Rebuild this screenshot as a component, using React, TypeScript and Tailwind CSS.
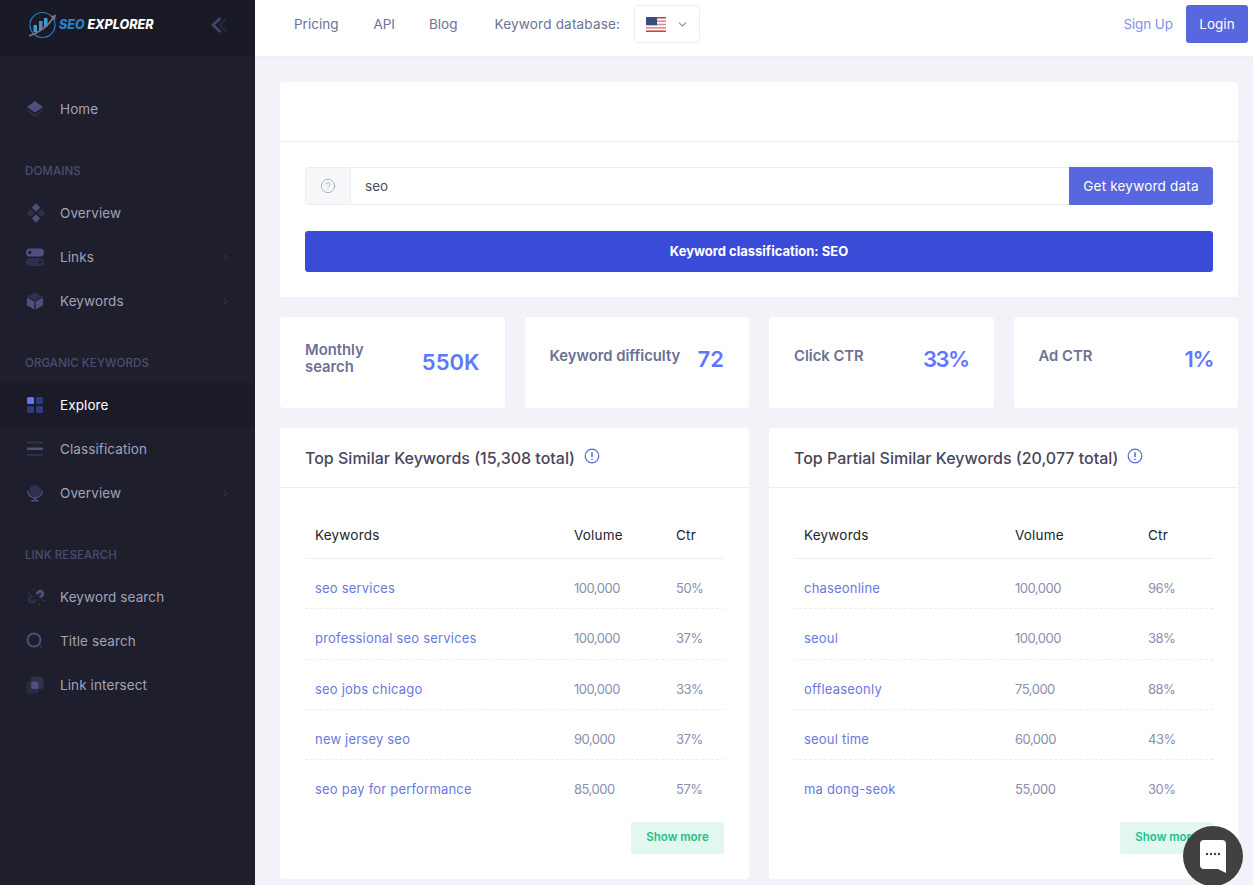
import { ChevronDown, ChevronRight, CircleHelp } from 'lucide-react';
import type { ReactNode } from 'react';

const similar = [
  ['seo services', '100,000', '50%'],
  ['professional seo services', '100,000', '37%'],
  ['seo jobs chicago', '100,000', '33%'],
  ['new jersey seo', '90,000', '37%'],
  ['seo pay for performance', '85,000', '57%'],
];

const partial = [
  ['chaseonline', '100,000', '96%'],
  ['seoul', '100,000', '38%'],
  ['offleaseonly', '75,000', '88%'],
  ['seoul time', '60,000', '43%'],
  ['ma dong-seok', '55,000', '30%'],
];

const c1 = '#4f4f7e';
const c2 = '#30304e';

function Logo() {
  return (
    <svg width="30" height="28" viewBox="0 0 30 28" fill="none">
      <circle cx="14.5" cy="14" r="12.5" stroke="#2b7fc4" strokeWidth="1.2" />
      <rect x="5.5" y="14" width="3.5" height="7" fill="#3a9be0" />
      <rect x="11" y="10" width="3.5" height="9" fill="#5c86b8" />
      <rect x="16" y="7" width="3.5" height="9" fill="#3a9be0" />
      <path d="M1 25 C10 22 20 15 26 6" stroke="#77777f" strokeWidth="1.8" />
      <path d="M22.5 5.5 L28 3.5 L27 9 Z" fill="#77777f" />
    </svg>
  );
}

const icons: Record<string, ReactNode> = {
  home: (
    <svg width="18" height="18" viewBox="0 0 18 18">
      <path d="M9 1 L17 7 L9 12.5 L1 7 Z" fill={c1} />
      <path d="M1 11 L9 17 L17 11 L15.8 10.2 L9 15 L2.2 10.2 Z" fill={c2} />
    </svg>
  ),
  overview: (
    <svg width="20" height="20" viewBox="0 0 20 20">
      <rect x="7" y="1.5" width="6" height="6" rx="1" transform="rotate(45 10 4.5)" fill={c1} />
      <rect x="7" y="12.5" width="6" height="6" rx="1" transform="rotate(45 10 15.5)" fill={c1} />
      <rect x="1.5" y="7" width="6" height="6" rx="1" transform="rotate(45 4.5 10)" fill={c2} />
      <rect x="12.5" y="7" width="6" height="6" rx="1" transform="rotate(45 15.5 10)" fill={c2} />
    </svg>
  ),
  links: (
    <svg width="18" height="18" viewBox="0 0 18 18">
      <rect x="0" y="0.5" width="18" height="8" rx="3.5" fill={c1} />
      <circle cx="3.8" cy="4.5" r="1.7" fill="#1e1e2d" />
      <rect x="0" y="10" width="18" height="8" rx="3.5" fill={c2} />
      <circle cx="14.2" cy="14" r="1.7" fill="#1e1e2d" />
    </svg>
  ),
  keywords: (
    <svg width="18" height="18" viewBox="0 0 18 18">
      <path d="M9 0.5 L17 4.5 L9 8.5 L1 4.5 Z" fill={c2} />
      <path d="M1 5.5 L8.4 9.4 V17.5 L1 13.5 Z" fill={c1} />
      <path d="M17 5.5 L9.6 9.4 V17.5 L17 13.5 Z" fill={c1} />
    </svg>
  ),
  explore: (
    <svg width="18" height="18" viewBox="0 0 18 18">
      <rect x="1" y="1" width="7" height="7" rx="1.5" fill="#5d78ff" />
      <rect x="10" y="1" width="7" height="7" rx="1.5" fill="#2f3a7e" />
      <rect x="1" y="10" width="7" height="7" rx="1.5" fill="#2f3a7e" />
      <rect x="10" y="10" width="7" height="7" rx="1.5" fill="#2f3a7e" />
    </svg>
  ),
  classification: (
    <svg width="18" height="18" viewBox="0 0 18 18">
      <rect x="1" y="1.5" width="16" height="2" fill={c2} />
      <rect x="1" y="7.5" width="16" height="2.5" fill={c1} />
      <rect x="1" y="14" width="16" height="2" fill={c2} />
    </svg>
  ),
  globe: (
    <svg width="18" height="18" viewBox="0 0 18 18">
      <circle cx="9.2" cy="7" r="6" fill={c2} />
      <path d="M1 6.5 A8 8 0 0 0 17 6.5 L15.6 6.5 A6.6 6.6 0 0 1 2.4 6.5 Z" fill={c1} />
      <rect x="8.2" y="14" width="1.8" height="2.5" fill={c1} />
      <rect x="5" y="16" width="8" height="1.6" rx="0.8" fill={c1} />
    </svg>
  ),
  magnet: (
    <svg width="20" height="20" viewBox="0 0 20 20" fill="none">
      <path d="M10.5 7 L12.5 5 A2.4 2.4 0 0 1 16 8.5 L14 10.5" stroke={c1} strokeWidth="3" />
      <path d="M6 8.5 L4 10.5 A2.6 2.6 0 0 0 8 14.5 L10 12.5" stroke={c2} strokeWidth="3" />
      <path d="M7.5 1 L8.3 3.5 M1.5 6 L4 6.8 M13 16 L14 18.5 M16 13 L18.5 14" stroke={c2} strokeWidth="1.4" />
    </svg>
  ),
  search: (
    <svg width="18" height="18" viewBox="0 0 18 18" fill="none">
      <circle cx="8" cy="8" r="6.5" stroke={c1} strokeWidth="2" />
      <path d="M13 13 L16.5 16.5" stroke={c2} strokeWidth="2" />
    </svg>
  ),
  intersect: (
    <svg width="18" height="18" viewBox="0 0 18 18">
      <rect x="5" y="0.5" width="12.5" height="12.5" rx="2.5" fill={c2} />
      <rect x="0.5" y="5" width="12.5" height="12.5" rx="2.5" fill="#2a2a45" />
      <rect x="5" y="5.5" width="7.5" height="7.5" rx="1.5" fill={c1} />
    </svg>
  ),
};

function NavRow({ icon, label, active, arrow }: { icon: string; label: string; active?: boolean; arrow?: boolean }) {
  return (
    <div className={`flex h-11 items-center pl-[26px] pr-[24px] ${active ? 'bg-[#1b1b28]' : ''}`}>
      <div className="flex w-[34px] shrink-0 items-center">{icons[icon]}</div>
      <span className={`flex-1 text-[13.5px] tracking-[0.1px] ${active ? 'text-white' : 'text-[#a2a3b7]'}`}>{label}</span>
      {arrow && <ChevronRight size={11} strokeWidth={1.5} className="text-[#4b4b6b]" />}
    </div>
  );
}

function Section({ label }: { label: string }) {
  return (
    <div className="mb-[10px] mt-[30px] flex h-5 items-center pl-[25px] pt-[2px] text-[11.5px] font-medium tracking-[0.1px] text-[#4c4e6f]">
      {label}
    </div>
  );
}

function Sidebar() {
  return (
    <aside className="flex w-[255px] shrink-0 flex-col bg-[#1e1e2d]">
      <div className="flex h-[56px] items-center bg-[#1a1a27] pb-[6px] pl-[28px] pr-[27px]">
        <Logo />
        <span className="ml-[1px] flex-1 whitespace-nowrap text-[12.5px] font-extrabold italic">
          <span className="text-[#2b82c9]">SEO</span> <span className="text-white">EXPLORER</span>
        </span>
        <svg width="17" height="16" viewBox="0 0 17 16" fill="none">
          <path d="M16 1 L9 8 L16 15" stroke="#2c2c4c" strokeWidth="1.6" />
          <path d="M9.5 1 L2 8 L9.5 15" stroke="#45456f" strokeWidth="2.6" />
        </svg>
      </div>
      <nav className="pt-[31px]">
        <NavRow icon="home" label="Home" />
        <Section label="DOMAINS" />
        <NavRow icon="overview" label="Overview" />
        <NavRow icon="links" label="Links" arrow />
        <NavRow icon="keywords" label="Keywords" arrow />
        <Section label="ORGANIC KEYWORDS" />
        <NavRow icon="explore" label="Explore" active />
        <NavRow icon="classification" label="Classification" />
        <NavRow icon="globe" label="Overview" arrow />
        <Section label="LINK RESEARCH" />
        <NavRow icon="magnet" label="Keyword search" />
        <NavRow icon="search" label="Title search" />
        <NavRow icon="intersect" label="Link intersect" />
      </nav>
    </aside>
  );
}

function Flag() {
  return (
    <svg width="20" height="15" viewBox="0 0 20 15">
      <rect width="20" height="15" fill="#fff" />
      <rect y="0" width="20" height="1.6" fill="#c9464f" />
      <rect y="3.4" width="20" height="1.6" fill="#e0888e" />
      <rect y="6.7" width="20" height="1.6" fill="#e0888e" />
      <rect y="10" width="20" height="1.6" fill="#e0888e" />
      <rect y="13.4" width="20" height="1.6" fill="#c9464f" />
      <rect width="11" height="8.2" fill="#3c4a82" />
    </svg>
  );
}

function Header() {
  return (
    <header className="flex h-[57px] shrink-0 items-center border-b border-[#eeeef6] bg-white pb-[8px] pl-[39px] pr-[5px] text-[13.5px] text-[#6c7293]">
      <span>Pricing</span>
      <span className="ml-[35px]">API</span>
      <span className="ml-[34px]">Blog</span>
      <span className="ml-[37px] tracking-[0.2px]">Keyword database:</span>
      <div className="ml-[14px] flex h-[38px] w-[66px] items-center justify-center gap-[10px] rounded border border-[#ebedf2]">
        <Flag />
        <ChevronDown size={13} className="text-[#8a8fa8]" />
      </div>
      <span className="ml-auto text-[13.5px] tracking-[-0.1px] text-[#7f8ff0]">Sign Up</span>
      <button className="ml-[13px] h-[38px] w-[62px] rounded-[3px] bg-[#5867dd] text-white">Login</button>
    </header>
  );
}

function Stat({ label, value, tall, tight }: { label: ReactNode; value: string; tall?: boolean; tight?: boolean }) {
  return (
    <div className={`flex h-[91px] items-center justify-between rounded bg-white px-[25px] ${tall ? '' : 'pb-[6px]'}`}>
      <div className={`text-[14.8px] font-semibold leading-[17px] text-[#6c7293] ${tall ? 'mb-[8px]' : 'mb-[7px]'}`}>{label}</div>
      <div className={`text-[22px] font-semibold text-[#5d78ff] ${tight ? 'tracking-[-1.5px]' : ''}`}>{value}</div>
    </div>
  );
}

function KeywordTable({ title, rows, cols }: { title: string; rows: string[][]; cols: string }) {
  return (
    <div className="flex h-[451px] flex-col rounded bg-white">
      <div className="flex h-[60px] items-center gap-[9px] border-b border-[#ebedf2] px-[25px]">
        <span className="text-[16px] font-medium text-[#48465b]">{title}</span>
        <svg width="16" height="16" viewBox="0 0 16 16" fill="none" className="mb-[3px]">
          <circle cx="8" cy="8" r="6.8" stroke="#5867dd" strokeWidth="1.2" />
          <path d="M8 4.2 V9 M8 10.8 V12" stroke="#5867dd" strokeWidth="1.5" />
        </svg>
      </div>
      <div className="px-[25px] pt-[25px]">
        <div className={`grid h-[46px] items-center border-b border-[#ebedf2] pl-[10px] text-[13.5px] tracking-[0.2px] text-[#212529] ${cols}`}>
          <span>Keywords</span>
          <span>Volume</span>
          <span>Ctr</span>
        </div>
        {rows.map((r, i) => (
          <div
            key={r[0]}
            className={`grid items-center pl-[10px] pt-[10px] text-[13px] tracking-[-0.5px] text-[#8a8fb0] ${cols} ${i === 1 ? 'h-[51px]' : 'h-[50px]'} ${i < 4 ? 'border-b border-dashed border-[#ebedf2]' : ''}`}
          >
            <span className="tracking-[0.2px] text-[#6a78e0]">{r[0]}</span>
            <span>{r[1]}</span>
            <span>{r[2]}</span>
          </div>
        ))}
        <div className="mt-[12px] flex justify-end">
          <button className="h-8 w-[93px] rounded-[3px] bg-[#e4f6f0] text-[11.5px] font-semibold text-[#1bc089]">Show more</button>
        </div>
      </div>
    </div>
  );
}

export default function App() {
  return (
    <div className="relative flex h-[885px] w-[1253px] overflow-hidden bg-[#f2f3f8] font-['Inter',sans-serif]">
      <Sidebar />
      <div className="flex min-w-0 flex-1 flex-col">
        <Header />
        <main className="flex flex-col gap-5 pl-[25px] pr-[15px] pt-[25px]">
          <div className="flex h-[215px] flex-col rounded bg-white">
            <div className="h-[60px] border-b border-[#ebedf2]" />
            <div className="px-[25px] pt-[25px]">
              <div className="flex h-[38px]">
                <div className="flex w-[46px] items-center justify-center rounded-l border border-[#ebedf2] bg-[#f7f8fa]">
                  <CircleHelp size={16} strokeWidth={1.4} className="text-[#a7abc3]" />
                </div>
                <div className="flex flex-1 items-center border-y border-[#ebedf2] pl-[14px] text-[13.5px] text-[#495057]">seo</div>
                <button className="w-[144px] rounded-r-[3px] bg-[#5867dd] text-[13.5px] tracking-[0.2px] text-white">Get keyword data</button>
              </div>
              <div className="mt-[26px] flex h-[41px] items-center justify-center rounded-[3px] bg-[#3a4bd8] text-[13px] font-bold text-white">
                Keyword classification: SEO
              </div>
            </div>
          </div>
          <div className="grid grid-cols-4 gap-5">
            <Stat label={<>Monthly<br />search</>} value="550K" tall />
            <Stat label="Keyword difficulty" value="72" />
            <Stat label="Click CTR" value="33%" tight />
            <Stat label="Ad CTR" value="1%" tight />
          </div>
          <div className="grid grid-cols-2 gap-5">
            <KeywordTable title="Top Similar Keywords (15,308 total)" rows={similar} cols="grid-cols-[259px_102px_1fr]" />
            <KeywordTable title="Top Partial Similar Keywords (20,077 total)" rows={partial} cols="grid-cols-[211px_133px_1fr]" />
          </div>
        </main>
      </div>
      <div className="absolute -bottom-px right-[10px] flex h-[60px] w-[60px] items-center justify-center rounded-full bg-[#414141]">
        <svg width="28" height="36" viewBox="0 0 28 36">
          <path d="M5 2 H23 A4 4 0 0 1 27 6 V35 L19 31 H5 A4 4 0 0 1 1 27 V6 A4 4 0 0 1 5 2 Z" fill="#fff" />
          <circle cx="8" cy="16" r="1.2" fill="#414141" />
          <circle cx="12" cy="16" r="1.2" fill="#414141" />
          <circle cx="16" cy="16" r="1.2" fill="#414141" />
          <circle cx="20" cy="16" r="1.2" fill="#414141" />
        </svg>
      </div>
    </div>
  );
}
